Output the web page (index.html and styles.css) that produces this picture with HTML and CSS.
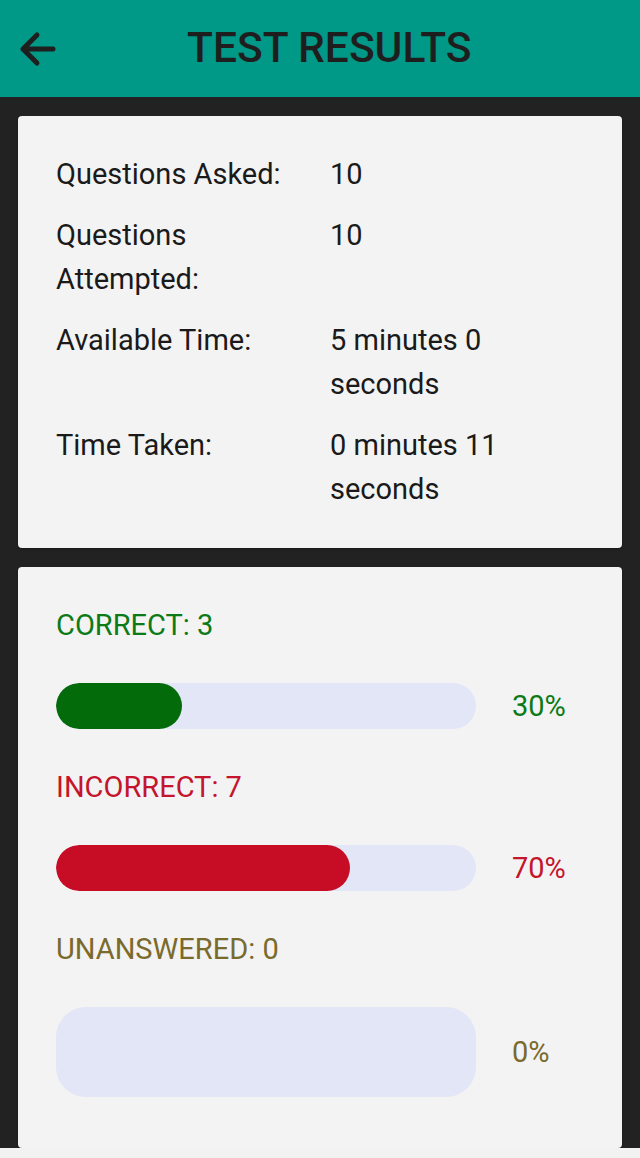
FILE: index.html
```html
<!DOCTYPE html>
<html lang="en">
<head>
<meta charset="utf-8">
<title>Test Results</title>
<link rel="stylesheet" href="styles.css">
</head>
<body>
<div class="screen">
  <header class="appbar">
    <svg class="back" width="40" height="40" viewBox="0 0 40 40" aria-hidden="true">
      <path d="M36 20 H6 M20 6 L6 20 L20 34" fill="none" stroke="#1f1f1f" stroke-width="5" stroke-linecap="round" stroke-linejoin="round"/>
    </svg>
    <h1 class="title">TEST RESULTS</h1>
  </header>
  <main class="content">
    <section class="card summary">
      <div class="label">Questions Asked:</div><div class="value">10</div>
      <div class="label">Questions Attempted:</div><div class="value">10</div>
      <div class="label">Available Time:</div><div class="value">5 minutes 0 seconds</div>
      <div class="label">Time Taken:</div><div class="value">0 minutes 11 seconds</div>
    </section>
    <section class="card stats">
      <div class="stat-label correct">CORRECT: 3</div>
      <div class="bar-row correct">
        <div class="track"><div class="fill" style="width:30%"></div></div>
        <div class="pct">30%</div>
      </div>
      <div class="stat-label incorrect">INCORRECT: 7</div>
      <div class="bar-row incorrect">
        <div class="track"><div class="fill" style="width:70%"></div></div>
        <div class="pct">70%</div>
      </div>
      <div class="stat-label unanswered">UNANSWERED: 0</div>
      <div class="bar-row unanswered">
        <div class="track tall"><div class="fill" style="width:0%"></div></div>
        <div class="pct">0%</div>
      </div>
    </section>
  </main>
</div>
</body>
</html>
```
FILE: styles.css
```css
html, body {
  margin: 0;
  padding: 0;
  background: #f2f2f2;
}
body {
  font-family: Roboto, "Noto Sans", "Liberation Sans", sans-serif;
  color: #1c1c1c;
}
.screen {
  width: 640px;
  height: 1148px;
  background: #222222;
  display: flex;
  flex-direction: column;
  overflow: hidden;
}
.appbar {
  height: 97px;
  flex: none;
  background: #009886;
  display: flex;
  align-items: center;
  padding-left: 17px;
}
.back {
  display: block;
  flex: none;
}
.title {
  margin: 0 0 0 130px;
  font-size: 42.5px;
  font-weight: 500;
  color: #1e1e1e;
  letter-spacing: 0;
  line-height: 1;
}
.content {
  flex: 1;
  display: flex;
  flex-direction: column;
  gap: 19px;
  padding: 19px 18px 0;
  min-height: 0;
}
.card {
  background: #f3f3f3;
  border-radius: 4px;
  box-shadow: 0 1px 2px rgba(0,0,0,0.3);
}
.summary {
  display: grid;
  grid-template-columns: 250px 220px;
  column-gap: 24px;
  row-gap: 17px;
  padding: 36px 38px 37px;
  font-size: 29px;
  line-height: 44px;
}
.label, .value {
  color: #1a1a1a;
}
.stats {
  flex: 1;
  padding: 36px 38px 0;
  display: flex;
  flex-direction: column;
  gap: 36px;
}
.stat-label {
  font-size: 29px;
  line-height: 44px;
}
.bar-row {
  display: flex;
  align-items: center;
  gap: 36px;
}
.track {
  width: 420px;
  height: 46px;
  border-radius: 23px;
  background: #e3e6f6;
  overflow: hidden;
  flex: none;
}
.track.tall {
  height: 90px;
  border-radius: 30px;
}
.fill {
  height: 100%;
  border-radius: 23px;
}
.pct {
  font-size: 29px;
  line-height: 44px;
}
.correct { color: #0c7a16; }
.correct .fill { background: #046b0b; }
.incorrect { color: #c4152c; }
.incorrect .fill { background: #c70d25; }
.unanswered { color: #7a6a2c; }
.unanswered .fill { background: #7a6a2c; }
```
